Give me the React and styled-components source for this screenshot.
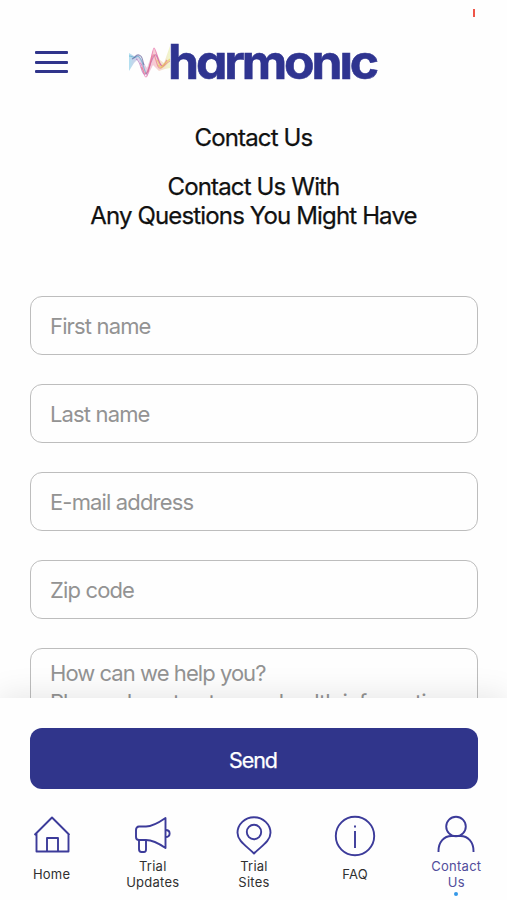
import React from 'react';
import styled, { createGlobalStyle } from 'styled-components';

const GlobalStyle = createGlobalStyle`
  * {
    box-sizing: border-box;
  }

  body {
    margin: 0;
    background: #fefefe;
    font-family: Inter, "Liberation Sans", sans-serif;
  }
`;

const Screen = styled.div`
  display: flex;
  flex-direction: column;
  height: 900px;
  overflow: hidden;
  background: #fefefe;
`;

const StatusBar = styled.div`
  display: flex;
  justify-content: flex-end;
  height: 30px;
  padding: 9px 32px 0 0;
`;

const RecordMark = styled.span`
  width: 2px;
  height: 8px;
  background: #ef5548;
`;

const Header = styled.header`
  display: flex;
  align-items: flex-start;
  height: 64px;
  padding-left: 35px;
`;

const MenuButton = styled.button`
  display: flex;
  flex-direction: column;
  justify-content: space-between;
  width: 33px;
  height: 22px;
  margin: 21px 60px 0 0;
  padding: 0;
  border: 0;
  background: none;
`;

const MenuLine = styled.span`
  height: 3px;
  border-radius: 1px;
  background: #30358b;
`;

const Logo = styled.svg`
  width: 260px;
  height: 64px;
  overflow: visible;
`;

const LogoText = styled.text`
  font-family: Inter, "Liberation Sans", sans-serif;
  font-size: 48px;
  font-weight: 700;
  font-feature-settings: "cv11" 1;
  letter-spacing: -3px;
  fill: #2f3490;
  stroke: #2f3490;
  stroke-width: 0.6px;
`;

const Content = styled.main`
  flex: 1;
  min-height: 0;
  overflow: hidden;
`;

const Title = styled.h1`
  margin: 29px 0 20px;
  color: #111;
  font-size: 24px;
  font-weight: 400;
  line-height: 29px;
  letter-spacing: -0.85px;
  text-align: center;
  -webkit-text-stroke: 0.25px #111;
`;

const Subtitle = styled(Title).attrs({ as: 'h2' })`
  margin: 0 0 66px;
`;

const Form = styled.form`
  display: flex;
  flex-direction: column;
  gap: 29px;
  padding: 0 29px 0 30px;
`;

const Input = styled.input`
  width: 100%;
  height: 59px;
  padding: 1px 19px 0;
  border: 1px solid #bdbdbd;
  border-radius: 12px;
  outline: 0;
  background: #fefefe;
  font-family: inherit;
  font-size: 22px;
  letter-spacing: -0.85px;

  &::placeholder {
    color: #939393;
    opacity: 1;
  }
`;

const Message = styled(Input).attrs({ as: 'textarea' })`
  height: 140px;
  padding: 10px 8px 10px 19px;
  line-height: 29px;
  letter-spacing: -0.95px;
  resize: none;
`;

const Footer = styled.footer`
  position: relative;
  height: 202px;
  padding-top: 30px;
  background: #fefefe;
  box-shadow: 0 -2px 30px rgba(0, 0, 0, 0.1);
`;

const SendButton = styled.button`
  display: block;
  width: 448px;
  height: 61px;
  margin: 0 0 0 30px;
  padding: 3px 2px 0 0;
  border: 0;
  border-radius: 12px;
  background: #30358b;
  color: #fff;
  font-family: inherit;
  font-size: 21.5px;
  letter-spacing: -1.1px;
  -webkit-text-stroke: 0.25px #fff;
`;

const Nav = styled.nav`
  display: grid;
  grid-template-columns: repeat(5, 101.2px);
  margin: 24px 0 0 1px;
`;

const NavItem = styled.a`
  display: flex;
  flex-direction: column;
  align-items: center;
  color: ${props => props.$active ? '#514d9b' : '#303030'};
`;

const NavIcon = styled.svg`
  width: 44px;
  height: 44px;
  fill: none;
  stroke: #3c3b9a;
  stroke-width: 1.9;
  stroke-linejoin: round;
`;

const NavLabel = styled.span`
  display: flex;
  align-items: center;
  height: 34px;
  font-size: 13px;
  line-height: 16px;
  letter-spacing: 0.25px;
  text-align: center;
  white-space: pre-line;
`;

const ActiveDot = styled.span`
  width: 4px;
  height: 4px;
  margin-top: 1px;
  border-radius: 50%;
  background: #3498e8;
`;

const fields = ['First name', 'Last name', 'E-mail address', 'Zip code'];

const navItems = [
  {
    label: 'Home',
    icon: (
      <>
        <path d="M4.500 22 22 4.500 39.500 22M6.500 20.500V38.500h32V20.500" />
        <path d="M17 38.500V25h11v13.500" />
      </>
    ),
  },
  {
    label: 'Trial\nUpdates',
    icon: (
      <>
        <path d="M8 13.500h7c7 0 13-4 19.500-8.500v30c-6.500-4.500-12.500-8-19.500-8H8c-2 0-3-1.500-3-3V17c0-2 1-3.500 3-3.500Z" />
        <path d="M8 27v9c0 2 .7 3 2.500 3h2.500c1.500 0 2-1 2-2.500V27M34.500 17c5.500 0 5.500 7 0 7" />
      </>
    ),
  },
  {
    label: 'Trial\nSites',
    icon: (
      <>
        <path d="M22 40.500C14.500 33 5.500 28 5.500 19.800a16.500 15.500 0 0 1 33 0c0 8.200-9 13.200-16.500 20.700Z" />
        <circle cx="22" cy="19" r="7.200" />
      </>
    ),
  },
  {
    label: 'FAQ',
    icon: (
      <>
        <circle cx="22" cy="23" r="19.200" />
        <path d="M22 18v17M22 12.500v2" />
      </>
    ),
  },
  {
    label: 'Contact\nUs',
    active: true,
    icon: (
      <>
        <circle cx="22" cy="13.500" r="9.800" />
        <path d="M4.500 39v-1c0-9 5.500-15 13-15h9c7.500 0 13 6 13 15v1" />
      </>
    ),
  },
];

const waves = [
  { color: '#4fa9c8', d: 'M1 13c4 0 5 3 7 1s4 0 6 5 3 12 5 12' },
  { color: '#4c4a8c', d: 'M4 16c4-1 3-5 7-4s3 5 5 10' },
  { color: '#a65bb0', d: 'M8 16c5 1 5 14 8 15s4-3 5-6 5-15 7-13 3 10 6 11' },
  { color: '#e2579b', d: 'M12 20c3 0 3 14 6 14s6-29 8-29 4 14 7 17 4-3 6-5' },
  { color: '#e87080', d: 'M13 24c4 4 3 9 6 5s5-19 7-17 3 15 7 13 5-5 9-7' },
  { color: '#e5c54c', d: 'M29 17c3 3 2 9 5 6s5-6 8-6M30 22c3 4 4 3 6 0s4-4 6-6' },
];

const HarmonicLogo = () => (
  <Logo viewBox="0 -13 260 64" role="img" aria-label="harmonic">
    <defs>
      <linearGradient id="waveFill">
        <stop offset="0" stopColor="#73c8e6" stopOpacity=".55" />
        <stop offset=".3" stopColor="#a772bb" stopOpacity=".35" />
        <stop offset=".6" stopColor="#ed7794" stopOpacity=".4" />
        <stop offset="1" stopColor="#d9e86c" stopOpacity=".35" />
      </linearGradient>
    </defs>
    <path
      fill="url(#waveFill)"
      d="M1 10l5 3 5-1 4 7 4 6 7-20 6 12 4 3 6-17v22l-5 1-6 2-6-6-6 12-5-11-4-7-4 4-5 8Z"
    />
    {waves.map(wave => (
      <path key={wave.color} d={wave.d} fill="none" stroke={wave.color} strokeWidth="1.1" opacity=".6" />
    ))}
    {/* The wordmark is set with a dotless i */}
    <LogoText x="40" y="35.500" textLength="208" lengthAdjust="spacingAndGlyphs">
      harmonıc
    </LogoText>
  </Logo>
);

const App = () => {
  return (
    <Screen>
      <GlobalStyle />
      <StatusBar>
        <RecordMark />
      </StatusBar>
      <Header>
        <MenuButton aria-label="Menu">
          <MenuLine />
          <MenuLine />
          <MenuLine />
        </MenuButton>
        <HarmonicLogo />
      </Header>
      <Content>
        <Title>Contact Us</Title>
        <Subtitle>
          Contact Us With<br />
          Any Questions You Might Have
        </Subtitle>
        <Form>
          {fields.map(field => <Input key={field} placeholder={field} />)}
          <Message placeholder={'How can we help you?\nPlease do not enter any health information'} />
        </Form>
      </Content>
      <Footer>
        <SendButton>Send</SendButton>
        <Nav>
          {navItems.map(item => (
            <NavItem key={item.label} $active={item.active}>
              <NavIcon viewBox="0 0 44 44">{item.icon}</NavIcon>
              <NavLabel>{item.label}</NavLabel>
              {item.active && <ActiveDot />}
            </NavItem>
          ))}
        </Nav>
      </Footer>
    </Screen>
  );
};

export default App;
